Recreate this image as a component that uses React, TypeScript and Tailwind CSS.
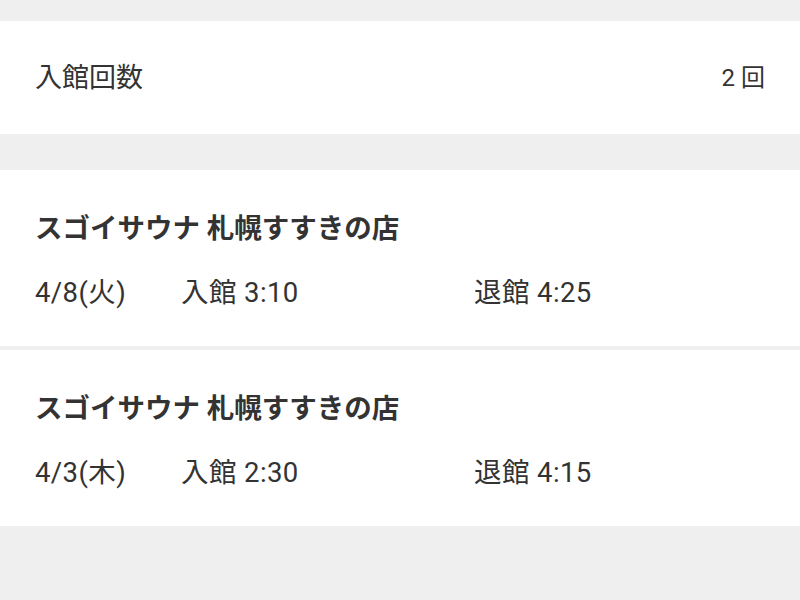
const visits = [
  { store: 'スゴイサウナ 札幌すすきの店', date: '4/8(火)', checkIn: '3:10', checkOut: '4:25' },
  { store: 'スゴイサウナ 札幌すすきの店', date: '4/3(木)', checkIn: '2:30', checkOut: '4:15' },
]

export default function App() {
  return (
    <div
      className="min-h-[600px] bg-[#efefef] pt-[21px] text-[27px] text-[#333333]"
      style={{ fontFamily: 'Roboto, "Noto Sans CJK JP", sans-serif' }}
    >
      <div className="flex h-[113px] items-center justify-between bg-white px-[35px]">
        <p className="leading-[36px]">入館回数</p>
        <p className="text-[24px] leading-[36px]">2 回</p>
      </div>

      <div className="mt-[36px] flex flex-col gap-[4px]">
        {visits.map((visit, index) => (
          <div key={index} className="bg-white px-[35px] pt-[41px] pb-[35px] text-[27.5px]">
            <p className="font-bold leading-[36px]">{visit.store}</p>
            <div className="mt-[28px] flex leading-[36px] tracking-[0.4px]">
              <p className="w-[146px]">{visit.date}</p>
              <p className="w-[293px]">入館 {visit.checkIn}</p>
              <p>退館 {visit.checkOut}</p>
            </div>
          </div>
        ))}
      </div>
    </div>
  )
}
